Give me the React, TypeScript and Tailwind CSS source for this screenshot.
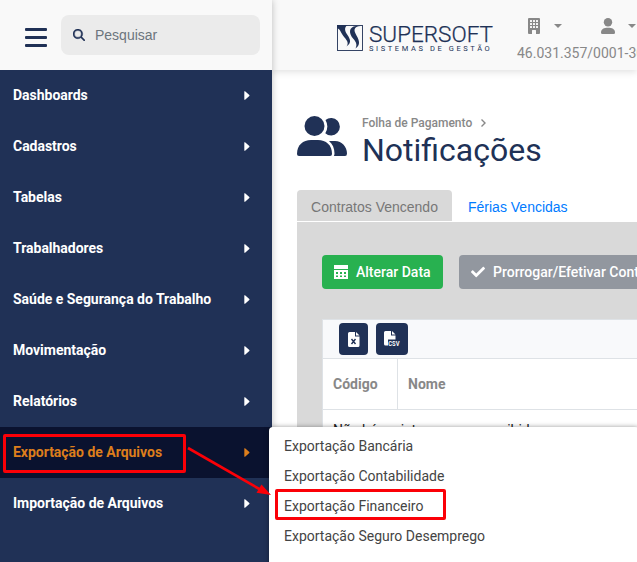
import React from 'react';
import { BsBuildingFill } from 'react-icons/bs';
import { FaCheck } from 'react-icons/fa';
import { FaMagnifyingGlass } from 'react-icons/fa6';

const menuItems = [
  'Dashboards',
  'Cadastros',
  'Tabelas',
  'Trabalhadores',
  'Saúde e Segurança do Trabalho',
  'Movimentação',
  'Relatórios',
  'Exportação de Arquivos',
  'Importação de Arquivos',
];

const submenuItems = [
  'Exportação Bancária',
  'Exportação Contabilidade',
  'Exportação Financeiro',
  'Exportação Seguro Desemprego',
];

const Sidebar: React.FC = () => (
  <aside className="relative z-10 w-[272px] h-full shrink-0 flex flex-col bg-[#203156] shadow-[0_0_7px_rgba(0,0,0,0.25)]">
    <div className="h-[70px] shrink-0 bg-[#f9f9f9] flex items-start pl-[25px]">
      <button className="mt-7 w-[22px] flex flex-col gap-[5px]">
        <span className="h-[3px] w-full rounded-[1px] bg-[#203156]" />
        <span className="h-[3px] w-full rounded-[1px] bg-[#203156]" />
        <span className="h-[3px] w-full rounded-[1px] bg-[#203156]" />
      </button>
      <div className="ml-[14px] mt-[15px] h-10 w-[199px] rounded-lg bg-[#ebebeb] flex items-center pl-3">
        <FaMagnifyingGlass className="size-3 text-[#203156]" stroke="currentColor" strokeWidth="14" />
        <span className="ml-[10px] font-['Liberation_Sans',sans-serif] text-[14px] text-[#6c757d]">Pesquisar</span>
      </div>
    </div>
    <nav>
      {menuItems.map((item) => (
        <div
          key={item}
          className={`h-[51px] flex items-center justify-between pl-[13px] pr-[22px] text-[14px] font-bold tracking-[-0.02px] ${
            item === 'Exportação de Arquivos' ? 'bg-[#0a122f] text-[#dd7e1c]' : 'text-white'
          }`}
        >
          <span>{item}</span>
          <svg width="6" height="9" viewBox="0 0 6 9" fill="currentColor">
            <path d="M0.300 0.300Q0.800 0 1.400 0.500L5.300 4.100Q5.700 4.500 5.300 4.900L1.400 8.500Q0.800 9 0.300 8.700Z" />
          </svg>
        </div>
      ))}
    </nav>
  </aside>
);

const Logo: React.FC = () => (
  <div className="flex items-start pt-[24px] text-[#203156]">
    <svg className="mt-px" width="26" height="26" viewBox="0 0 26 26">
      <rect x="0.5" y="0.5" width="25" height="25" fill="#f9f9f9" stroke="#203156" strokeWidth="0.9" />
      <path d="M0 0H10.500C7.500 2 7.500 5 9.500 8.500C12 12.500 16 17 9.500 21.500C12 18 10 15.500 7.500 12.500C3.500 8 4 4.500 0 3Z" fill="#203156" />
      <path d="M23.500 1C17.500 1.500 16.500 4.500 18.500 8.500C21 13.500 25 19 18.500 23.500C20.500 19.500 19 17 16.500 14C11.500 8.500 11.500 2 19 1Z" fill="#203156" />
    </svg>
    <div className="ml-[6px] w-[127px]">
      <div className="-mt-px h-[22px] text-[22.500px] leading-[22px] font-light tracking-[0px] [-webkit-text-stroke:0.25px_#203156]">SUPERSOFT</div>
      <div className="text-[7.500px] leading-[8px] tracking-[2.600px] whitespace-nowrap">SISTEMAS DE GESTÃO</div>
    </div>
  </div>
);

const DownArrow: React.FC<{ className: string }> = ({ className }) => (
  <svg className={className} width="8" height="4" viewBox="0 0 8 4" fill="currentColor">
    <path d="M0 0H8L4 4Z" />
  </svg>
);

const TopBar: React.FC = () => (
  <header className="h-[70px] shrink-0 bg-[#f9f9f9] shadow-[0_2px_7px_rgba(0,0,0,0.12)] flex pl-[65px]">
    <Logo />
    <div className="ml-[21px] pt-[18px] w-[140px] shrink-0 text-[#888]">
      <div className="flex items-center pl-[9px]">
        <BsBuildingFill className="size-4" />
        <DownArrow className="ml-[12px]" />
        <svg className="ml-[39px] shrink-0" width="14" height="16" viewBox="0 0 14 16" fill="currentColor">
          <circle cx="7" cy="4.300" r="4.200" />
          <path d="M0 14.500C0 11 3 9.800 7 9.800S14 11 14 14.500Q14 16 12.700 16H1.300Q0 16 0 14.500Z" />
        </svg>
        <DownArrow className="ml-[13px] shrink-0" />
      </div>
      <div className="mt-[9px] text-[14px] leading-5 whitespace-nowrap">46.031.357/0001-30</div>
    </div>
  </header>
);

const PeopleIcon: React.FC = () => (
  <svg className="mt-px" width="50" height="40" viewBox="0 0 50 40" fill="currentColor">
    <circle cx="17.500" cy="10" r="10" />
    <path d="M0 38C0 29 6 24 14 24H21C29 24 35 29 35 38Q35 40 33 40H2Q0 40 0 38Z" />
    <path d="M28.300 17.200A13 13 0 0 0 28.500 4A8.750 8.750 0 1 1 28.300 17.200Z" />
    <path d="M32 25H38C45 25 50 31 50 37.500Q50 40 48 40H36.800Q37.500 39 37.500 37.500C37.500 32 35.500 28 32 25Z" />
  </svg>
);

const CalendarIcon: React.FC = () => (
  <svg width="14" height="14" viewBox="0 0 14 14" fill="currentColor">
    <path d="M0 0H14V4H0Z" />
    <path fillRule="evenodd" d="M0 5H14V14H0ZM2 7V9H4V7ZM6 7V9H8V7ZM10 7V9H12V7ZM2 10.5V12H4V10.5ZM6 10.5V12H8V10.5ZM10 10.5V12H12V10.5Z" />
  </svg>
);

const ExcelIcon: React.FC = () => (
  <svg width="12" height="15" viewBox="0 0 12 15">
    <path d="M1.5 0H7V4.5H11.5V13.5Q11.5 15 10 15H1.5Q0 15 0 13.5V1.5Q0 0 1.5 0Z" fill="white" />
    <path d="M8 0L11.5 3.5H8Z" fill="white" />
    <path d="M3.5 7L7.5 12M7.5 7L3.5 12" stroke="#203156" strokeWidth="1.4" />
  </svg>
);

const CsvIcon: React.FC = () => (
  <svg width="16" height="16" viewBox="0 0 16 16" overflow="visible">
    <path d="M1.5 0H7V4.5H11.5V8.5H4V14.5H1.5Q0 14.5 0 13V1.5Q0 0 1.5 0Z" fill="white" />
    <path d="M8 0L11.5 3.5H8Z" fill="white" />
    <text x="4.3" y="15" fontSize="7" fontWeight="bold" fill="white" textLength="11.2" lengthAdjust="spacingAndGlyphs">CSV</text>
  </svg>
);

const NotificationsPanel: React.FC = () => (
  <section className="flex-1 bg-[#d9d9d9] pl-[25px] pt-[33px] flex flex-col">
    <div className="flex gap-4 text-white text-[14px] font-medium whitespace-nowrap">
      <button className="h-[34px] w-[121px] shrink-0 rounded bg-[#28b150] flex items-center pl-3 gap-[8px]">
        <CalendarIcon />
        <span className="pt-px">Alterar Data</span>
      </button>
      <button className="h-[34px] w-[220px] shrink-0 rounded bg-[#92979f] flex items-center pl-3 gap-[8px]">
        <FaCheck className="size-[14px]" />
        <span className="pt-px">Prorrogar/Efetivar Contrato</span>
      </button>
    </div>
    <div className="mt-[30px] flex-1 bg-white border-l border-t border-[#dee2e6]">
      <div className="h-[39px] bg-[#f8f9fb] border-b border-[#dee2e6] flex items-start gap-2 pl-4 pt-[3px]">
        <button className="w-[29px] h-8 rounded bg-[#203156] flex items-center justify-center"><ExcelIcon /></button>
        <button className="w-8 h-8 rounded bg-[#203156] flex items-center justify-center"><CsvIcon /></button>
      </div>
      <div className="h-[51px] border-b border-[#dee2e6] flex text-[14px] font-bold text-[#888]">
        <div className="w-[75px] shrink-0 border-r border-[#dee2e6] flex items-center pl-[10px]">Código</div>
        <div className="flex items-center pl-[10px]">Nome</div>
      </div>
      <div className="pl-[10px] pt-[10px] text-[14px] leading-5 text-[#222] whitespace-nowrap">Não há registros a serem exibidos</div>
    </div>
  </section>
);

const Submenu: React.FC = () => (
  <div className="absolute z-20 left-[269px] top-[427px] w-[370px] h-[150px] rounded bg-white shadow-[0_0_5px_rgba(0,0,0,0.4)] pl-[15px] pt-1 text-[14px] text-[#444]">
    {submenuItems.map((item) => (
      <div key={item} className="h-[30px] flex items-center">{item}</div>
    ))}
  </div>
);

const Annotations: React.FC = () => (
  <svg className="absolute inset-0 z-30" width="637" height="562" fill="none" stroke="#fb0007" strokeWidth="3">
    <rect x="4.5" y="435.500" width="180" height="36" rx="0.5" />
    <rect x="276.500" y="490.500" width="168" height="28" rx="0.5" />
    <path d="M188 448L261 490" strokeWidth="2.6" />
    <path d="M271 495L256.500 492.800L261.500 484.500Z" fill="#fb0007" stroke="none" />
  </svg>
);

export default function App() {
  return (
    <div className="relative w-full h-[562px] overflow-hidden bg-white flex font-[Roboto,sans-serif]">
      <Sidebar />
      <div className="flex-1 min-w-0 flex flex-col">
        <TopBar />
        <main className="flex-1 pl-[25px] flex flex-col">
          <div className="flex h-[120px] pt-[45px] text-[#203156]">
            <PeopleIcon />
            <div className="ml-[15px]">
              <div className="h-4 flex items-center text-[12px] font-medium text-[#888]">
                Folha de Pagamento
                <svg className="ml-2" width="7" height="8" viewBox="0 0 7 8" fill="none" stroke="currentColor" strokeWidth="1.4">
                  <path d="M1.500 0.500L5 4L1.500 7.500" />
                </svg>
              </div>
              <h1 className="text-[32px] leading-[38px]">Notificações</h1>
            </div>
          </div>
          <div className="flex h-8 font-['Liberation_Sans',sans-serif] text-[14px]">
            <div className="h-[31px] w-[155px] rounded-t bg-[#d9d9d9] text-[#777] flex items-center justify-center pt-1">Contratos Vencendo</div>
            <div className="h-[31px] pl-4 text-[#007bff] flex items-center pt-1">Férias Vencidas</div>
          </div>
          <NotificationsPanel />
        </main>
      </div>
      <Submenu />
      <Annotations />
    </div>
  );
}
